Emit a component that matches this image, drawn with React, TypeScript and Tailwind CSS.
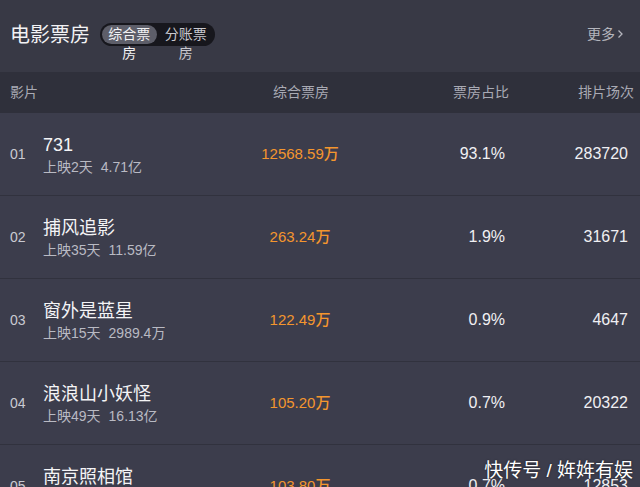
import React from "react";

const rows = [
  { rank: "01", name: "731", days: "上映2天", total: "4.71亿", box: "12568.59万", pct: "93.1%", cnt: "283720" },
  { rank: "02", name: "捕风追影", days: "上映35天", total: "11.59亿", box: "263.24万", pct: "1.9%", cnt: "31671" },
  { rank: "03", name: "窗外是蓝星", days: "上映15天", total: "2989.4万", box: "122.49万", pct: "0.9%", cnt: "4647" },
  { rank: "04", name: "浪浪山小妖怪", days: "上映49天", total: "16.13亿", box: "105.20万", pct: "0.7%", cnt: "20322" },
  { rank: "05", name: "南京照相馆", days: "上映66天", total: "30.12亿", box: "103.80万", pct: "0.7%", cnt: "12853" },
];

const font = { fontFamily: '"Liberation Sans", "Noto Sans CJK SC", sans-serif' };

export default function App() {
  return (
    <div className="relative w-[640px] h-[487px] overflow-hidden bg-[#31323e]" style={font}>
      {/* top bar */}
      <div className="h-[72px] bg-[#383945] flex items-start pt-[23px] pl-[10px] pr-[16px]">
        <div className="text-[20px] leading-[24px] text-[#f2f2f4]">电影票房</div>
        <div className="ml-[10px] flex items-center h-[23px] w-[115px] rounded-full bg-[#17171d] px-[2px] overflow-visible">
          <div className="w-[55px] h-[19px] rounded-full bg-[#5d5e69] text-[14px] leading-[19px] text-center text-[#f2f2f4] self-start mt-[2px]">
            综合票房
          </div>
          <div className="w-[55px] h-[19px] text-[14px] leading-[19px] text-center text-[#c9c9cf] self-start mt-[2px] ml-[2px]">
            分账票房
          </div>
        </div>
        <div className="ml-auto mt-[1px] flex items-center text-[14px] leading-[20px] text-[#b4b5bd]">
          更多
          <svg width="7" height="10" viewBox="0 0 7 10" className="ml-[2px]">
            <path d="M1.5 1.5 L5 5 L1.5 8.5" fill="none" stroke="#b4b5bd" strokeWidth="1.3" />
          </svg>
        </div>
      </div>
      {/* header row */}
      <div className="h-[41px] bg-[#2f303b] grid grid-cols-[233px_116px_150px_1fr] items-center pl-[10px] pr-[6px] text-[14px] text-[#a9aab4]">
        <div>影片</div>
        <div className="text-center">综合票房</div>
        <div className="text-right">票房占比</div>
        <div className="text-right">排片场次</div>
      </div>
      {/* rows */}
      <div className="flex flex-col gap-[1px]">
        {rows.map((r) => (
          <div
            key={r.rank}
            className="h-[82px] bg-[#3c3d4c] grid grid-cols-[33px_200px_114px_150px_1fr] items-center pl-[10px] pr-[12px]"
          >
            <div className="text-[14px] text-[#c9cad2]">{r.rank}</div>
            <div className="flex flex-col pt-[3px]">
              <div className="text-[18px] leading-[22px] text-[#f4f4f6]">{r.name}</div>
              <div className="text-[14px] leading-[20px] text-[#b9bac3] mt-[1px]">
                {r.days}
                <span className="ml-[8px]">{r.total}</span>
              </div>
            </div>
            <div className="text-center text-[15px] text-[#f4962e] font-medium">{r.box}</div>
            <div className="text-right text-[16px] text-[#f0f0f3] pr-[2px]">{r.pct}</div>
            <div className="text-right text-[16px] text-[#f0f0f3]">{r.cnt}</div>
          </div>
        ))}
      </div>
      {/* watermark */}
      <div
        className="absolute right-[7px] bottom-[6px] text-[19px] leading-[20px] text-white"
        style={{ textShadow: "0 0 2px rgba(0,0,0,0.6)" }}
      >
        快传号 / 姩姩有娱
      </div>
    </div>
  );
}
